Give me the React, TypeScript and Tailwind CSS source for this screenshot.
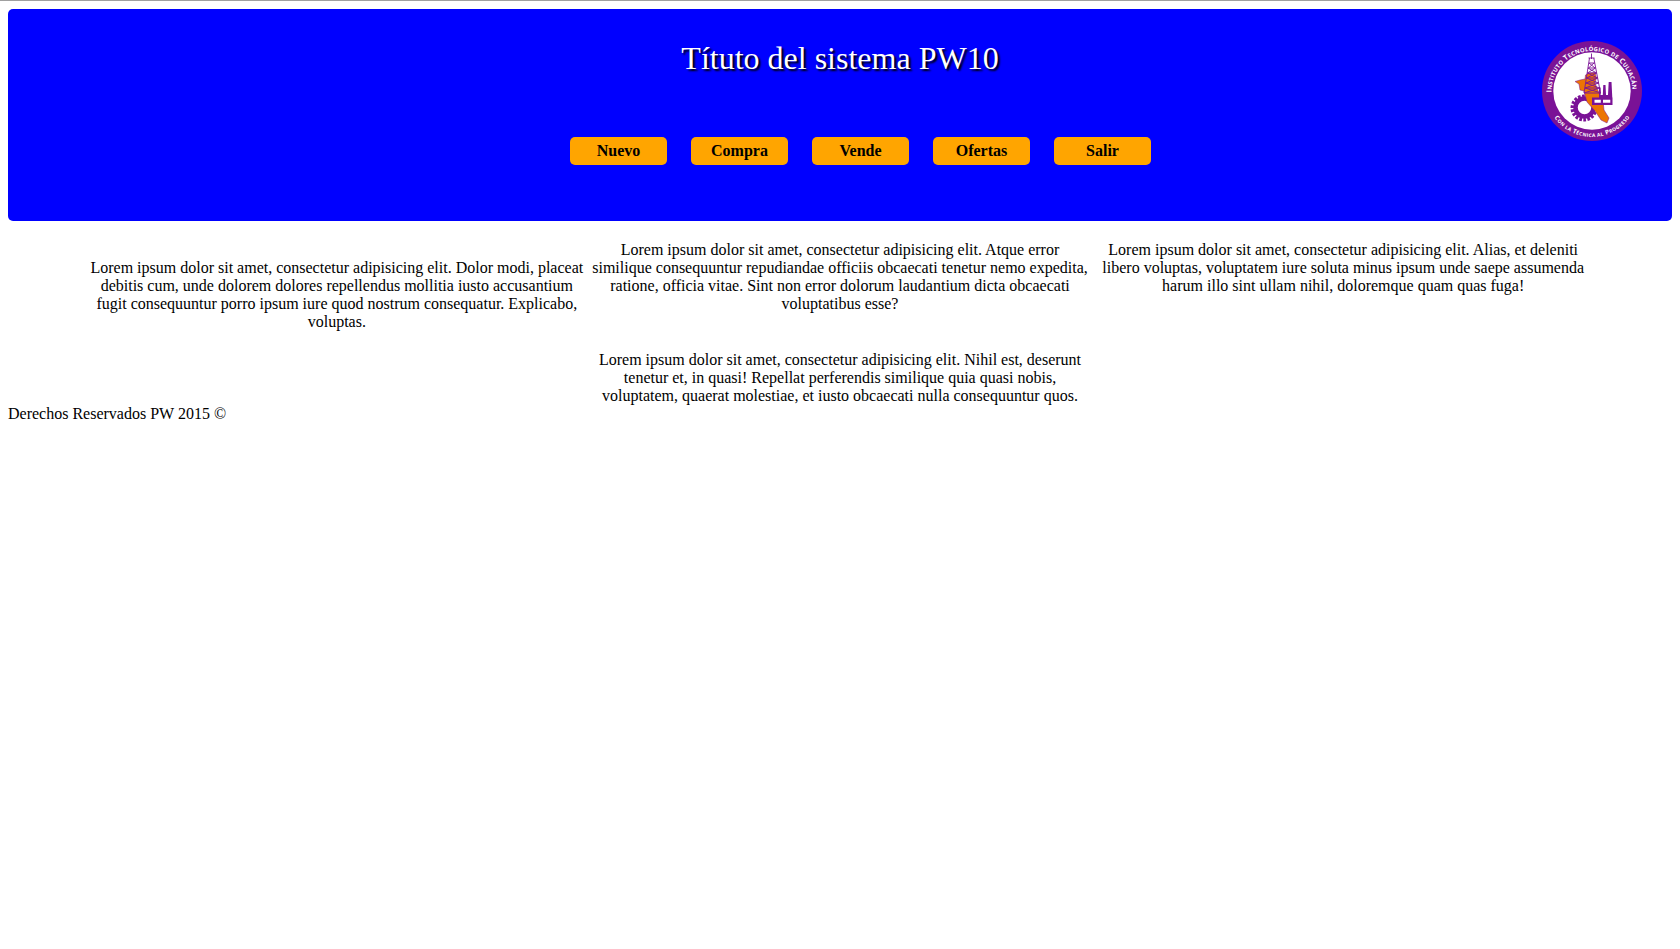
const links = ["Nuevo", "Compra", "Vende", "Ofertas", "Salir"];

function Logo() {
  return (
    <svg viewBox="0 0 100 100" className="h-[100px] w-[100px]">
      <defs>
        <path id="arcTop" d="M 9.5 52 A 40.5 40.5 0 0 1 90.5 49" />
        <path id="arcBottom" d="M 4 50 A 46 46 0 0 0 96 50" />
      </defs>
      <circle cx="50" cy="50" r="50" fill="#7a1296" />
      <circle cx="50" cy="50" r="38.7" fill="#fff" />
      <circle cx="42.5" cy="66.5" r="9" fill="none" stroke="#7a1296" strokeWidth="4.5" />
      <circle cx="42" cy="67" r="11.8" fill="none" stroke="#7a1296" strokeWidth="3.4" strokeDasharray="2.7 1.4" />
      <path d="M33 40.5L38 39L43 38L43.5 34L47 32L53 31.5L54.5 37L53 42L57 52L61 60L62 69L67 77L65 82L59 79L53 70L45 61L43 54L42 50L38 49L37 43Z" fill="#ec7404" stroke="#7a1296" strokeWidth=".5" />
      <path d="M49.5 12.5V18M46.5 17H52.5M47.5 17L42 52M51.8 17L58.5 52M47 22H53M46.5 27L52 22M47 22L53 27M46 27H53.5M46 27L54.5 32M53.5 27L45.5 32M45 32H54.5M44.5 37H55.5M44 42H56.5M43 47H57.5M42 52H59M44.5 37L54.5 32M45.5 32L55.5 37M44 42L55.5 37M44.5 37L56.5 42M43 47L56.5 42M44 42L57.5 47M42 52L57.5 47M43 47L59 52" fill="none" stroke="#7a1296" strokeWidth=".9" />
      <path d="M50 56.5H70.5V64H50ZM57 57V54H60.8L61.3 44H63.5L64 54H66L66.7 41H69.5L70.3 57ZM57 57V46.5H58.6V57Z" fill="#7a1296" />
      <path d="M52.5 58.7H58.8V61.8H52.5ZM61 58.7H68.3V61.8H61Z" fill="#fff" />
      <g fill="#fff" fontFamily="'Open Sans', sans-serif" fontWeight="700" textAnchor="middle">
        <text fontSize="7.2">
          <textPath href="#arcTop" startOffset="50%" textLength="126">
            I<tspan fontSize="5.8">NSTITUTO</tspan> T<tspan fontSize="5.8">ECNOLÓGICO DE</tspan> C<tspan fontSize="5.8">ULIACÁN</tspan>
          </textPath>
        </text>
        <text fontSize="6.2">
          <textPath href="#arcBottom" startOffset="50%" textLength="88">
            C<tspan fontSize="4.9">ON LA</tspan> T<tspan fontSize="4.9">ÉCNICA AL</tspan> P<tspan fontSize="4.9">ROGRESO</tspan>
          </textPath>
        </text>
      </g>
    </svg>
  );
}

export default function App() {
  return (
    <div className="h-[949px] overflow-hidden border-t border-[#a0a0a0] bg-white px-2 pt-2 font-['Liberation_Serif',serif] text-base leading-[18px] text-black">
      <header className="relative h-[212px] rounded-[5px] bg-[#0000ff] pt-[31px]">
        <h1 className="text-center text-[32px] leading-9 text-white [text-shadow:2px_2px_2px_#000]">Títuto del sistema PW10</h1>
        <nav className="mt-[61px] flex gap-6 pl-[562px]">
          {links.map((link) => (
            <a key={link} href="#" className="h-7 w-[97px] rounded-[5px] bg-[#ffa500] text-center leading-7 font-bold">
              {link}
            </a>
          ))}
        </nav>
        <div className="absolute top-[32px] right-[30px]">
          <Logo />
        </div>
      </header>
      <main className="flex justify-center gap-1 pt-5 text-center">
        <p className="mt-[18px] w-[499.2px]">
          Lorem ipsum dolor sit amet, consectetur adipisicing elit. Dolor modi, placeat debitis cum, unde dolorem dolores repellendus mollitia iusto accusantium fugit consequuntur porro ipsum iure quod nostrum consequatur. Explicabo, voluptas.
        </p>
        <div className="w-[499.2px]">
          <p>
            Lorem ipsum dolor sit amet, consectetur adipisicing elit. Atque error similique consequuntur repudiandae officiis obcaecati tenetur nemo expedita, ratione, officia vitae. Sint non error dolorum laudantium dicta obcaecati voluptatibus esse?
          </p>
          <p className="mt-[38px]">
            Lorem ipsum dolor sit amet, consectetur adipisicing elit. Nihil est, deserunt tenetur et, in quasi! Repellat perferendis similique quia quasi nobis, voluptatem, quaerat molestiae, et iusto obcaecati nulla consequuntur quos.
          </p>
        </div>
        <p className="w-[499.2px]">
          Lorem ipsum dolor sit amet, consectetur adipisicing elit. Alias, et deleniti libero voluptas, voluptatem iure soluta minus ipsum unde saepe assumenda harum illo sint ullam nihil, doloremque quam quas fuga!
        </p>
      </main>
      <footer>Derechos Reservados PW 2015 ©</footer>
    </div>
  );
}
